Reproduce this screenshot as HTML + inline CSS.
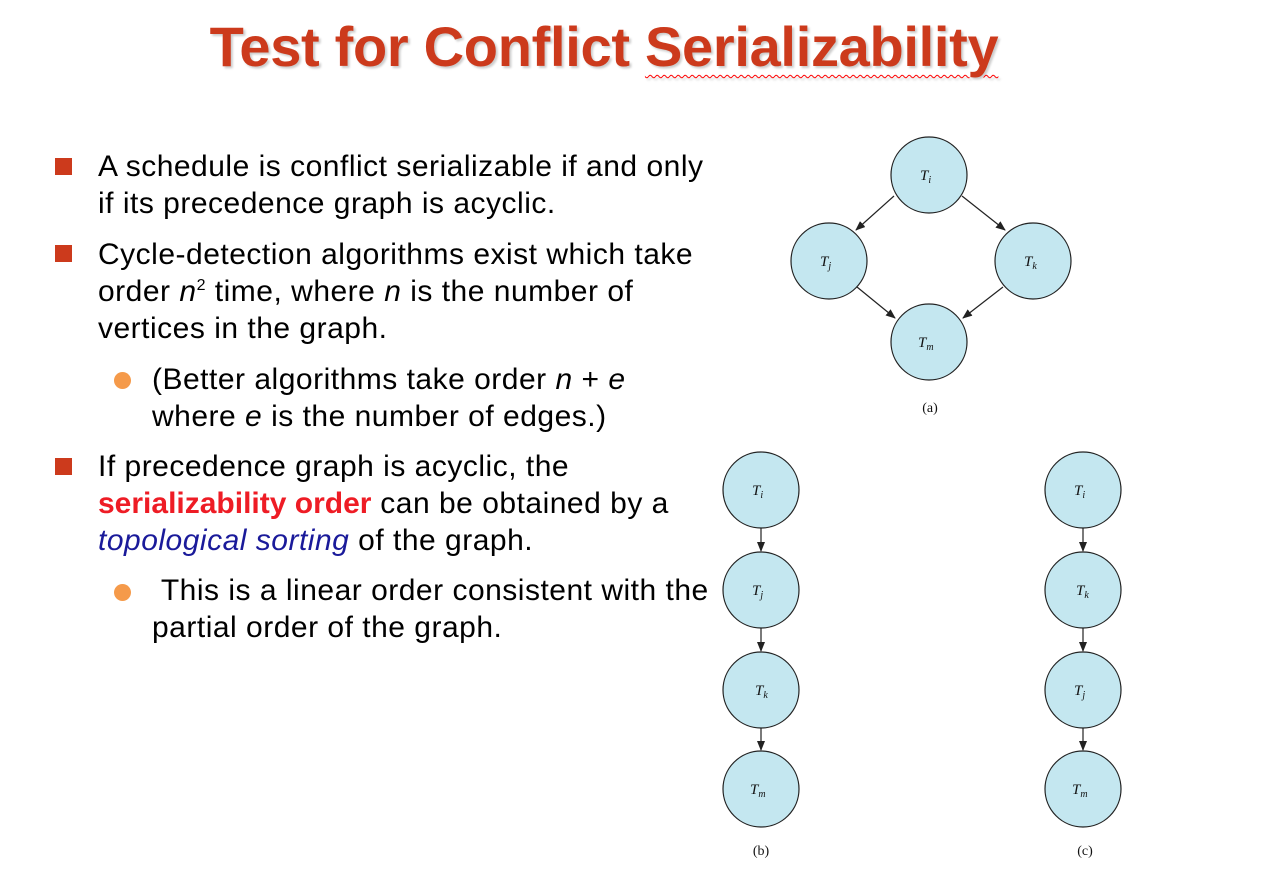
<!DOCTYPE html>
<html><head><style>
body{margin:0;width:1272px;height:896px;background:#fff;position:relative;overflow:hidden;font-family:"Liberation Sans",sans-serif;}
h1{position:absolute;left:0;width:1208px;top:14px;margin:0;text-align:center;font-size:56px;font-weight:bold;color:#cc3a1c;letter-spacing:-0.3px;text-shadow:2px 2px 2px #ccc;}
.t{position:absolute;font-size:30px;color:#000;line-height:37px;letter-spacing:0.5px;white-space:nowrap}
sup{font-size:16px;line-height:0}
.sq{position:absolute;width:17px;height:17px;background:#cc3a1c}
.dot{position:absolute;width:17px;height:17px;border-radius:50%;background:#f59a4a}
svg{position:absolute;left:0;top:0}
</style></head><body>
<h1>Test for Conflict <span style="text-decoration:underline wavy red;text-decoration-thickness:1px;text-underline-offset:8px">Serializability</span></h1>
<div class="sq" style="left:55px;top:158px"></div>
<div class="t" style="left:98px;top:148px">A schedule is conflict serializable if and only<br>if its precedence graph is acyclic.</div>
<div class="sq" style="left:55px;top:245px"></div>
<div class="t" style="left:98px;top:236px">Cycle-detection algorithms exist which take<br>order <i>n</i><sup>2</sup> time, where <i>n</i> is the number of<br>vertices in the graph.</div>
<div class="dot" style="left:114px;top:372px"></div>
<div class="t" style="left:152px;top:361px">(Better algorithms take order <i>n</i> + <i>e</i><br>where <i>e</i> is the number of edges.)</div>
<div class="sq" style="left:55px;top:458px"></div>
<div class="t" style="left:98px;top:448px">If precedence graph is acyclic, the<br><b style="color:#ee1c25;letter-spacing:0px">serializability order</b> can be obtained by a<br><i style="color:#1a1a9a">topological sorting</i> of the graph.</div>
<div class="dot" style="left:114px;top:584px"></div>
<div class="t" style="left:152px;top:572px">&nbsp;This is a linear order consistent with the<br>partial order of the graph.</div>
<svg width="1272" height="896" font-family="Liberation Serif,serif">
<defs><marker id="a" markerWidth="10" markerHeight="8" refX="9" refY="4" orient="auto" markerUnits="userSpaceOnUse"><path d="M0,0L10,4L0,8z" fill="#222"/></marker></defs>
<g stroke="#222" stroke-width="1.2" marker-end="url(#a)">
<line x1="894" y1="196" x2="856" y2="230"/>
<line x1="962" y1="196" x2="1005" y2="230"/>
<line x1="857" y1="287" x2="895" y2="318"/>
<line x1="1003" y1="287" x2="963" y2="318"/>
<line x1="761" y1="528" x2="761" y2="551"/>
<line x1="761" y1="628" x2="761" y2="651"/>
<line x1="761" y1="728" x2="761" y2="750"/>
<line x1="1083" y1="528" x2="1083" y2="551"/>
<line x1="1083" y1="628" x2="1083" y2="651"/>
<line x1="1083" y1="728" x2="1083" y2="750"/>
</g>
<g fill="#c4e7f0" stroke="#222" stroke-width="1.2">
<circle cx="929" cy="175" r="38"/><circle cx="829" cy="261" r="38"/><circle cx="1033" cy="261" r="38"/><circle cx="929" cy="342" r="38"/>
<circle cx="761" cy="490" r="38"/><circle cx="761" cy="590" r="38"/><circle cx="761" cy="690" r="38"/><circle cx="761" cy="789" r="38"/>
<circle cx="1083" cy="490" r="38"/><circle cx="1083" cy="590" r="38"/><circle cx="1083" cy="690" r="38"/><circle cx="1083" cy="789" r="38"/>
</g>
<g font-size="15" font-style="italic" fill="#111">
<text x="920" y="180">T<tspan font-size="10" dy="3">i</tspan></text>
<text x="820" y="266">T<tspan font-size="10" dy="3">j</tspan></text>
<text x="1024" y="266">T<tspan font-size="10" dy="3">k</tspan></text>
<text x="918" y="347">T<tspan font-size="10" dy="3">m</tspan></text>
<text x="752" y="495">T<tspan font-size="10" dy="3">i</tspan></text>
<text x="752" y="595">T<tspan font-size="10" dy="3">j</tspan></text>
<text x="755" y="695">T<tspan font-size="10" dy="3">k</tspan></text>
<text x="750" y="794">T<tspan font-size="10" dy="3">m</tspan></text>
<text x="1074" y="495">T<tspan font-size="10" dy="3">i</tspan></text>
<text x="1076" y="595">T<tspan font-size="10" dy="3">k</tspan></text>
<text x="1074" y="695">T<tspan font-size="10" dy="3">j</tspan></text>
<text x="1072" y="794">T<tspan font-size="10" dy="3">m</tspan></text>
</g>
<g font-size="14" fill="#111" text-anchor="middle">
<text x="930" y="412">(a)</text><text x="761" y="855">(b)</text><text x="1085" y="855">(c)</text>
</g>
</svg>
</body></html>
